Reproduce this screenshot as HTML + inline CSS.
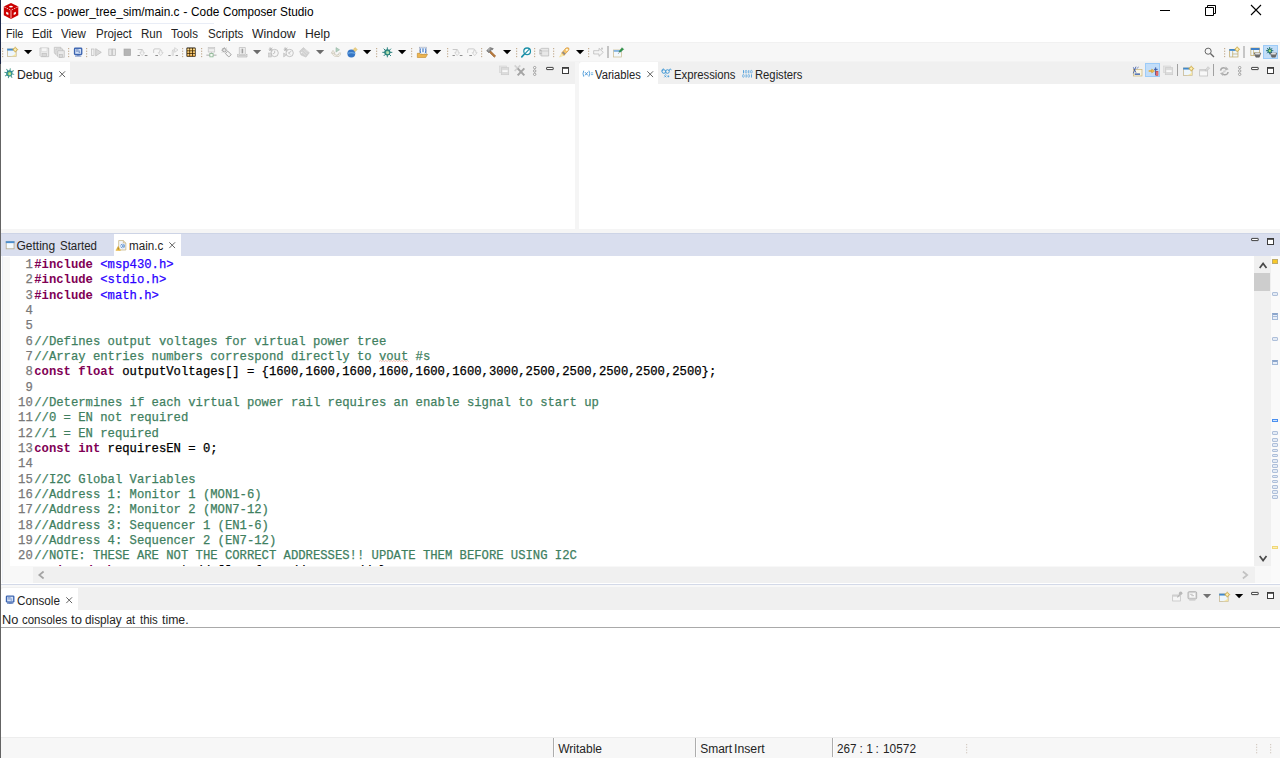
<!DOCTYPE html>
<html lang="en">
<head>
<meta charset="utf-8">
<title>CCS - power_tree_sim/main.c - Code Composer Studio</title>
<style>
*{box-sizing:border-box;margin:0;padding:0}
html,body{width:1280px;height:758px;overflow:hidden;background:#fff}
body{position:relative;font-family:"Liberation Sans",sans-serif;font-size:12px;color:#000}
.abs{position:absolute}
.t{position:absolute;white-space:nowrap;line-height:16px;height:16px;font-size:12px;color:#242424;transform-origin:0 0}
svg{position:absolute;overflow:visible}
#titlebar{left:0;top:0;width:1280px;height:23px;background:#fff}
#menubar{left:0;top:23px;width:1280px;height:19px;background:#fff}
#menuline{left:0;top:23px;width:214px;height:1px;background:#e9edf6}
#toolbar{left:0;top:42px;width:1280px;height:20px;background:#f7f7f7;border-top:1px solid #f1f1f1}
#leftedge{left:0;top:0;width:1.300px;height:758px;background:#646464}
#leftedge2{left:0;top:0;width:1.300px;height:64px;background:#1c2848}
#toparea{left:0;top:62px;width:1280px;height:171px;background:#f5f5f5}
#tbline{left:1.300px;top:61px;width:1279px;height:1px;background:#f3f3f3}
#dbgtabs{left:1px;top:62px;width:574px;height:22px;background:#f0f0f0}
#dbgbody{left:1px;top:84px;width:574px;height:145px;background:#fff}
#vartabs{left:579px;top:62px;width:701px;height:22px;background:#f0f0f0}
#varbody{left:579px;top:84px;width:701px;height:145px;background:#fff}
.seltab{position:absolute;background:#fff}
#edtabs{left:1px;top:233px;width:1279px;height:23px;background:#d9deee;border-top:1px solid #cdd4e6}
#edbody{left:1px;top:256px;width:1279px;height:310px;background:#fff;overflow:hidden}
#marker{left:2.500px;top:257px;width:7.500px;height:309px;background:#f8f8f8}
#code{position:absolute;left:0;top:0;width:1254px;height:310px;overflow:hidden;font-family:"Liberation Mono",monospace;font-size:12.22px;line-height:15.333px;color:#000}
.ln{position:absolute;left:17.100px;height:15.333px;white-space:pre;-webkit-text-stroke:0.250px}
.gap{display:inline-block;width:1.500px}
.num{color:#787878}
.kw{color:#7f0055;font-weight:bold;-webkit-text-stroke:0}
.inc{color:#2a00ff}
.cm{color:#3f7f5f}
.sq{text-decoration:underline wavy #e8a080 1px;text-underline-offset:1.500px}
#vscroll{left:1254px;top:256px;width:17px;height:310px;background:#f0f0f0}
#vthumb{left:1254.300px;top:273.400px;width:15.900px;height:17.500px;background:#cdcdcd}
#ruler{left:1271px;top:256px;width:9px;height:327px;background:#fafafa}
#hscroll{left:33px;top:567px;width:1221.500px;height:16px;background:#f0f0f0}
#hstrip{left:33px;top:566px;width:1238px;height:1px;background:#f8f8f8}
#edleft{left:1.500px;top:256px;width:1px;height:329px;background:#eef1f8}
#hleft{left:2.500px;top:566px;width:30.500px;height:17px;background:#f8f8f8}
#hcorner{left:1254.500px;top:566px;width:16.500px;height:17px;background:#f8f8f8}
#conarea{left:0;top:583px;width:1280px;height:155px;background:#fff}
#conline{left:1px;top:584px;width:1279px;height:1px;background:#d3d9e8}
#contabs{left:1px;top:587px;width:1279px;height:23px;background:#f0f0f0}
#congap{left:1px;top:585px;width:1279px;height:2px;background:#f8f8f8}
#conrule{left:1px;top:627px;width:1279px;height:1px;background:#a9a9a9}
#status{left:0;top:737px;width:1280px;height:21px;background:#f7f7f7;border-top:1px solid #ededed}
</style>
</head>
<body>
<div id="titlebar" class="abs"></div>
<svg style="left:3px;top:3px" width="16" height="16" viewBox="0 0 16 16"><path d="M8 0 L15.300 3.500 L15.300 12.200 L8 15.900 L0.800 12.200 L0.800 3.500 Z" fill="#cc0000"/><path d="M1.200 3.900 L8 7.300 L14.900 3.900" stroke="#fff" stroke-opacity="0.800" stroke-width="0.900" stroke-dasharray="1.700 1" fill="none"/><path d="M8 7.600 L8 15.600" stroke="#ee8c8c" stroke-width="1.300" fill="none"/><ellipse cx="8" cy="3.600" rx="1.900" ry="0.950" fill="#fff"/><path d="M3.200 8.700 L5.400 9.700 L5.400 12 L3.200 11 Z" fill="#fff"/><path d="M12.900 8.700 L10.700 9.700 L10.700 12 L12.900 11 Z" fill="#fff"/></svg>
<span class="t" style="left:24.2px;top:4px;transform:scaleX(0.854);font-size:12.6px;color:#000">CCS</span><span class="t" style="left:49.78px;top:4px;font-size:12.6px;color:#000">-</span><span class="t" style="left:56.95px;top:4px;transform:scaleX(0.941);font-size:12.6px;color:#000">power_tree_sim/main.c</span><span class="t" style="left:183.33px;top:4px;font-size:12.6px;color:#000">-</span><span class="t" style="left:191.12px;top:4px;transform:scaleX(0.94);font-size:12.6px;color:#000">Code</span><span class="t" style="left:222.71px;top:4px;transform:scaleX(0.923);font-size:12.6px;color:#000">Composer</span><span class="t" style="left:279.92px;top:4px;transform:scaleX(0.94);font-size:12.6px;color:#000">Studio</span>
<svg style="left:1155px;top:0" width="125" height="22" viewBox="0 0 125 22"><path d="M5 10.500 H15" stroke="#000" stroke-width="1"/><path d="M50.500 7.500 H58.500 V15.500 H50.500 Z M52.500 7.500 V5.500 H60.500 V13.500 H58.500" stroke="#000" stroke-width="1" fill="none"/><path d="M96 5 L106 15 M106 5 L96 15" stroke="#000" stroke-width="1.100"/></svg>
<div id="menubar" class="abs"></div><div id="menuline" class="abs"></div>
<span class="t" style="left:5.56px;top:26px;transform:scaleX(0.896)">File</span><span class="t" style="left:32.34px;top:26px;transform:scaleX(0.965)">Edit</span><span class="t" style="left:61.44px;top:26px;transform:scaleX(0.963)">View</span><span class="t" style="left:95.64px;top:26px;transform:scaleX(0.957)">Project</span><span class="t" style="left:140.54px;top:26px;transform:scaleX(0.966)">Run</span><span class="t" style="left:171.14px;top:26px;transform:scaleX(0.961)">Tools</span><span class="t" style="left:207.52px;top:26px;transform:scaleX(0.965)">Scripts</span><span class="t" style="left:252.15px;top:26px;transform:scaleX(1.02)">Window</span><span class="t" style="left:305.14px;top:26px;transform:scaleX(1.016)">Help</span>
<div id="toolbar" class="abs"></div>
<div class="abs" style="left:1263px;top:45px;width:15.300px;height:13.800px;background:#c2ddf8;border:1px solid #9ccbf8"></div>
<svg style="left:7.2px;top:47px" width="10.67" height="10.67" viewBox="0 0 16 16"><rect x="0.800" y="3" width="13" height="11.300" fill="#eef6fc" stroke="#c4b48c" stroke-width="1.100"/><rect x="0.300" y="2.500" width="9.500" height="2.800" fill="#3f88cc"/><path d="M5 14 Q12 13 13.500 7.500 L13.500 14 Z" fill="#f6e6a4"/><circle cx="12.400" cy="3.900" r="2.700" fill="#fbeeb8" stroke="#c8a030" stroke-width="1.100"/><path d="M12.400 -0.500 V1 M12.400 6.800 V8.300 M8 3.900 H9.500 M15.300 3.900 H16.800" stroke="#c8a030" stroke-width="1"/></svg>
<svg style="left:38.7px;top:47px" width="10.67" height="10.67" viewBox="0 0 16 16"><path d="M1.5 1.500 H14.500 V14.500 H3 L1.500 13 Z" fill="#e9e9e9" stroke="#b8b8b8"/><rect x="4" y="1.500" width="8" height="5" fill="#f6f6f6" stroke="#d8d8d8" stroke-width="0.8"/><rect x="4.500" y="9.500" width="7" height="5" fill="#d8d8d8" stroke="#b8b8b8" stroke-width="0.8"/></svg>
<svg style="left:54px;top:47px" width="10.67" height="10.67" viewBox="0 0 16 16"><path d="M0.5 0.500 H10.500 V10.500 H2 L0.500 9 Z" fill="#e9e9e9" stroke="#b8b8b8"/><path d="M3 3 H13 V13 H4.500 L3 11.500 Z" fill="#e9e9e9" stroke="#b8b8b8"/><path d="M5.500 5.500 H15.500 V15.500 H7 L5.500 14 Z" fill="#e9e9e9" stroke="#b8b8b8"/><rect x="8" y="11" width="5" height="4.500" fill="#d8d8d8" stroke="#b8b8b8" stroke-width="0.8"/></svg>
<svg style="left:72.7px;top:47px" width="10.67" height="10.67" viewBox="0 0 16 16"><rect x="1.300" y="0.900" width="12.800" height="11.300" rx="2.200" fill="#3c64b0"/><rect x="3.300" y="2.900" width="8.800" height="7.300" fill="#d4e2f8"/><path d="M4.300 4.300 H8.500 M4.300 6.200 H10.500 M8.500 8 H10.800" stroke="#5070b0" stroke-width="1.100"/><path d="M5.500 12.200 H10 V13 H12.500 V14.300 H3 V13 H5.500 Z" fill="#4468b0" opacity="0.850"/></svg>
<svg style="left:91px;top:47px" width="10.67" height="10.67" viewBox="0 0 16 16"><rect x="1" y="3" width="3.500" height="10" fill="#f2f2f2" stroke="#b8b8b8"/><path d="M7 2.500 L15.500 8 L7 13.500 Z" fill="#d8d8d8" stroke="#b8b8b8"/></svg>
<svg style="left:106.6px;top:47px" width="10.67" height="10.67" viewBox="0 0 16 16"><rect x="2.700" y="3" width="4.600" height="10" fill="#e9e9e9" stroke="#b8b8b8"/><rect x="8.300" y="3" width="4.600" height="10" fill="#e9e9e9" stroke="#b8b8b8"/></svg>
<svg style="left:122px;top:47px" width="10.67" height="10.67" viewBox="0 0 16 16"><rect x="3" y="3" width="10" height="10" fill="#b4b4b4" stroke="#a8a8a8"/></svg>
<svg style="left:137px;top:47px" width="10.67" height="10.67" viewBox="0 0 16 16"><path d="M1 3.800 H8.500" stroke="#c8c8c8" stroke-width="1.500" fill="none"/><path d="M6 5.500 H9.500 V8.500 H11.500 L7.750 13 L4 8.500 H6 Z" fill="#f4f4f4" stroke="#c4c4c4" stroke-width="0.900"/><path d="M0.800 12.800 H4.300 M11.700 12.800 H15.700" stroke="#909090" stroke-width="1.500"/></svg>
<svg style="left:153px;top:47px" width="10.67" height="10.67" viewBox="0 0 16 16"><path d="M1 9 V4.500 Q1 2.800 3 2.800 H9 Q12 2.800 12 5" stroke="#c8c8c8" stroke-width="1.400" fill="none"/><path d="M9.800 5.500 H13.300 V8.500 H15.300 L11.550 13 L7.800 8.500 H9.800 Z" fill="#f4f4f4" stroke="#c4c4c4" stroke-width="0.900"/><path d="M3.500 12.800 H7.500" stroke="#909090" stroke-width="1.500"/></svg>
<svg style="left:168px;top:47px" width="10.67" height="10.67" viewBox="0 0 16 16"><path d="M7 13 V7 Q7 4.500 10 4.500" stroke="#c8c8c8" stroke-width="2.600" fill="none"/><path d="M7 13 V7 Q7 4.500 10 4.500" stroke="#f4f4f4" stroke-width="1" fill="none"/><path d="M10 1 L15 4.500 L10 8 Z" fill="#f4f4f4" stroke="#c4c4c4" stroke-width="0.900"/><path d="M0.500 12.800 H4 M11.500 12.800 H15" stroke="#909090" stroke-width="1.500"/></svg>
<svg style="left:186.4px;top:47px" width="10.67" height="10.67" viewBox="0 0 16 16"><rect x="0.700" y="0.900" width="13.800" height="13.800" rx="1.200" fill="#1c1408"/><rect x="1.9" y="2.3" width="3.300" height="3.100" fill="#f4b840"/><rect x="2.3" y="2.6" width="2.500" height="1.300" fill="#fff4d0"/><rect x="6.1" y="2.3" width="3.300" height="3.100" fill="#f4b840"/><rect x="6.5" y="2.6" width="2.500" height="1.300" fill="#fff4d0"/><rect x="10.3" y="2.3" width="3.300" height="3.100" fill="#f4b840"/><rect x="10.7" y="2.6" width="2.500" height="1.300" fill="#fff4d0"/><rect x="1.9" y="6.5" width="3.300" height="3.100" fill="#eca830"/><rect x="2.3" y="6.8" width="2.500" height="1.300" fill="#fff4d0"/><rect x="6.1" y="6.5" width="3.300" height="3.100" fill="#eca830"/><rect x="6.5" y="6.8" width="2.500" height="1.300" fill="#fff4d0"/><rect x="10.3" y="6.5" width="3.300" height="3.100" fill="#eca830"/><rect x="10.7" y="6.8" width="2.500" height="1.300" fill="#fff4d0"/><rect x="1.9" y="10.7" width="3.300" height="3.100" fill="#e09828"/><rect x="2.3" y="11.0" width="2.500" height="1.300" fill="#fff4d0"/><rect x="6.1" y="10.7" width="3.300" height="3.100" fill="#e09828"/><rect x="6.5" y="11.0" width="2.500" height="1.300" fill="#fff4d0"/><rect x="10.3" y="10.7" width="3.300" height="3.100" fill="#e09828"/><rect x="10.7" y="11.0" width="2.500" height="1.300" fill="#fff4d0"/></svg>
<svg style="left:205.5px;top:47px" width="10.67" height="10.67" viewBox="0 0 16 16"><rect x="3.300" y="1" width="9.800" height="6.500" fill="#f0f0f0" stroke="#c0c0c0"/><rect x="3.300" y="1" width="9.800" height="2.300" fill="#d4d4d4"/><path d="M8.200 7.500 V10" stroke="#c0c0c0" stroke-width="1.300"/><path d="M0.500 12.300 H15.800" stroke="#c4c4c4" stroke-width="2.200"/><rect x="5.800" y="9.800" width="4.800" height="5" fill="#f4faf4" stroke="#7fae88" stroke-width="1.100"/></svg>
<svg style="left:221px;top:47px" width="10.67" height="10.67" viewBox="0 0 16 16"><circle cx="5" cy="4.800" r="2.700" fill="#e4e4e4" stroke="#949494" stroke-width="1.200"/><path d="M5 0.300 V1.800 M0.500 4.800 H2 M1.600 1.400 L2.800 2.600 M8.400 1.400 L7.200 2.600 M1.600 8.200 L2.800 7 M8 4.800 H9.500" stroke="#949494" stroke-width="1"/><rect x="7.300" y="8" width="7.500" height="5.200" rx="1" fill="#f4f4f4" stroke="#9c9c9c" stroke-width="1.300" transform="rotate(42 11 10.500)"/></svg>
<svg style="left:236.5px;top:47px" width="10.67" height="10.67" viewBox="0 0 16 16"><path d="M3.500 0.800 H12.500 V11 H3.500 Z" fill="#f6f6f6" stroke="#b4b4b4"/><path d="M8 2.500 V9.500" stroke="#a0a0a0" stroke-width="2.400"/><path d="M5.800 2.500 V9 M10.200 2.500 V9" stroke="#d0d0d0" stroke-width="0.900"/><path d="M1 10.500 L3 12.500 H13 L15 10.500 V15 H1 Z" fill="#e4e4e4" stroke="#b4b4b4"/></svg>
<svg style="left:267.5px;top:47px" width="10.67" height="10.67" viewBox="0 0 16 16"><circle cx="10" cy="9" r="5.500" fill="#f6f6f6" stroke="#b8b8b8" stroke-width="1.200"/><path d="M10 5.500 V9 L7 10.500" stroke="#b8b8b8" stroke-width="1.200" fill="none"/><path d="M1.500 1 L6.500 6 M6.500 1 L1.500 6 M4 0.500 V6.500 M1 3.500 H7" stroke="#b0b0b0" stroke-width="1"/><rect x="1" y="9" width="4" height="6" fill="#d8d8d8" stroke="#b8b8b8" stroke-width="0.8"/></svg>
<svg style="left:283px;top:47px" width="10.67" height="10.67" viewBox="0 0 16 16"><circle cx="10" cy="9" r="5.500" fill="#f6f6f6" stroke="#b8b8b8" stroke-width="1.200"/><path d="M12.500 6.500 L8 9 L11 11" stroke="#b8b8b8" stroke-width="1.200" fill="none"/><path d="M1.500 1 L6.500 6 M6.500 1 L1.500 6 M4 0.500 V6.500 M1 3.500 H7" stroke="#b0b0b0" stroke-width="1"/><path d="M1 9 L5 12 L1 15 Z" fill="#d8d8d8" stroke="#b8b8b8" stroke-width="0.8"/></svg>
<svg style="left:299.3px;top:47px" width="10.67" height="10.67" viewBox="0 0 16 16"><path d="M0.800 6.500 L6.500 0.800 L15.500 8.500 L10.500 15.200 L3 12 Z" fill="#d0d0d0" stroke="#c0c0c0" stroke-width="0.800"/><path d="M4 6.500 L10 12.500 M6.500 4.500 L12.500 10.500 M9 3.500 L13.500 8" stroke="#e8e8e8" stroke-width="1"/><circle cx="3.800" cy="8.500" r="1" fill="#f4f4f4"/></svg>
<svg style="left:331px;top:47px" width="10.67" height="10.67" viewBox="0 0 16 16"><path d="M3.200 8 A5.200 5.200 0 0 0 13.600 8.500" fill="none" stroke="#c4c0b4" stroke-width="3.400"/><path d="M3.200 8 A5.200 5.200 0 0 0 13.600 8.500" fill="none" stroke="#f2eee4" stroke-width="1.700"/><path d="M0.200 9.300 L3 5 L6.200 9.300 Z" fill="#f2eee4" stroke="#c4c0b4" stroke-width="0.900"/><path d="M7.500 0.800 L12.800 4.200 L7.500 7.600 Z" fill="#b4d0c0" stroke="#90b4a0" stroke-width="0.800"/></svg>
<svg style="left:347.2px;top:47px" width="10.67" height="10.67" viewBox="0 0 16 16"><circle cx="6.500" cy="9.800" r="5.900" fill="#3676c4"/><path d="M0.800 8.800 Q6.500 6.200 12.200 8.800 L12.200 10.600 Q6.500 8.400 0.800 10.600 Z" fill="#6ca8e4"/><path d="M12.300 0.800 L15.400 3.900 L12.300 7 L9.200 3.900 Z" fill="#ecd084" stroke="#d0ac50" stroke-width="0.600"/></svg>
<svg style="left:382.2px;top:47px" width="10.67" height="10.67" viewBox="0 0 16 16"><path d="M8 0.500 V15.500 M0.500 8 H15.500 M2.500 2.500 L13.500 13.500 M13.500 2.500 L2.500 13.500" stroke="#2c8480" stroke-width="1.500"/><circle cx="8" cy="8" r="4.700" fill="#2c8480"/><circle cx="8.300" cy="8.300" r="2.500" fill="#9cd4a8"/><circle cx="9" cy="9" r="1.200" fill="#e4f4c8"/></svg>
<svg style="left:417px;top:47px" width="10.67" height="10.67" viewBox="0 0 16 16"><rect x="3.500" y="0.300" width="11" height="11" fill="#fafcff" stroke="#98a4bc" stroke-width="0.900"/><path d="M6.300 2 Q5 2 5.300 4 Q5.500 5.500 4.300 5.700 Q5.500 5.900 5.300 7.500 Q5 9.300 6.300 9.300 M11.700 2 Q13 2 12.700 4 Q12.500 5.500 13.700 5.700 Q12.500 5.900 12.700 7.500 Q13 9.300 11.700 9.300" stroke="#2868c0" stroke-width="1.300" fill="none"/><path d="M9 2 V8" stroke="#2868c0" stroke-width="1.600"/><path d="M0.500 9.500 H4 L5.500 11 H15.800 L13 15.800 H0.500 Z" fill="#ecb450" stroke="#c08828" stroke-width="0.900"/></svg>
<svg style="left:452px;top:47px" width="10.67" height="10.67" viewBox="0 0 16 16"><path d="M1 3.800 H8.500" stroke="#c8c8c8" stroke-width="1.500" fill="none"/><path d="M6 5.500 H9.500 V8.500 H11.500 L7.750 13 L4 8.500 H6 Z" fill="#f4f4f4" stroke="#c4c4c4" stroke-width="0.900"/><path d="M0.800 12.800 H4.300 M11.700 12.800 H15.700" stroke="#909090" stroke-width="1.500"/></svg>
<svg style="left:467.3px;top:47px" width="10.67" height="10.67" viewBox="0 0 16 16"><path d="M1 9 V4.500 Q1 2.800 3 2.800 H9 Q12 2.800 12 5" stroke="#c8c8c8" stroke-width="1.400" fill="none"/><path d="M9.800 5.500 H13.300 V8.500 H15.300 L11.550 13 L7.800 8.500 H9.800 Z" fill="#f4f4f4" stroke="#c4c4c4" stroke-width="0.900"/><path d="M3.500 12.800 H7.500" stroke="#909090" stroke-width="1.500"/></svg>
<svg style="left:486px;top:47px" width="10.67" height="10.67" viewBox="0 0 16 16"><path d="M7 6 L14.500 13.500 L12.500 15.500 L5 8 Z" fill="#b87838" stroke="#8a5420" stroke-width="0.8"/><path d="M1 5.500 L6 0.800 L11 2.500 L9.500 4 L8.500 3.800 L4.500 8.500 Z" fill="#8c8c8c" stroke="#585858" stroke-width="0.9"/><path d="M3 5 L6.500 1.800" stroke="#d8d8d8" stroke-width="1"/></svg>
<svg style="left:520.5px;top:47px" width="10.67" height="10.67" viewBox="0 0 16 16"><circle cx="9.200" cy="6.500" r="5" fill="#fff" stroke="#1c90a8" stroke-width="1.900"/><path d="M5.500 10.200 L1.200 14.800" stroke="#1c90a8" stroke-width="2.500" stroke-linecap="round"/><path d="M6 9.800 L12.500 3.200" stroke="#1c90a8" stroke-width="1.600"/></svg>
<svg style="left:539px;top:47px" width="10.67" height="10.67" viewBox="0 0 16 16"><path d="M1 4 L4 2 H14.500 V13.500 H4 L1 11 Z" fill="#e8e8e8" stroke="#b4b4b4"/><path d="M1 4 L4 6 V13.500 M4 6 H14.500" stroke="#c0c0c0" stroke-width="0.900" fill="none"/><circle cx="2.800" cy="5.500" r="1.200" fill="#b0b0b0"/><circle cx="2.800" cy="9.500" r="1.200" fill="#b0b0b0"/></svg>
<svg style="left:558.7px;top:47px" width="10.67" height="10.67" viewBox="0 0 16 16"><path d="M0.800 15.200 L4.500 8.500 L8.500 12 Z" fill="#fbeeb4" stroke="#ecd070" stroke-width="0.600"/><path d="M4 9 L10.500 1.500 Q14 0.500 15 2 Q15.500 4 13.500 6 L7.500 12.500 Z" fill="#f6c468" stroke="#d08828" stroke-width="0.900"/><path d="M5.500 7.500 L9 11" stroke="#8c8c8c" stroke-width="2.600"/><circle cx="11.800" cy="4.300" r="1.700" fill="#fff8e0"/></svg>
<svg style="left:593px;top:47px" width="10.67" height="10.67" viewBox="0 0 16 16"><path d="M1 5.500 H9 V2 L15.500 8 L9 14 V10.500 H1 Z" fill="#f4f4f4" stroke="#b8b8b8" stroke-width="1.100"/><circle cx="13.500" cy="2.500" r="1.600" fill="#c8c8c8"/></svg>
<svg style="left:613px;top:47px" width="10.67" height="10.67" viewBox="0 0 16 16"><rect x="1" y="4.500" width="12" height="10.500" fill="#f4f9fd" stroke="#c8b888" stroke-width="1"/><rect x="1" y="4.500" width="12" height="2.800" fill="#86b4e0"/><path d="M9 7 L13.500 1 L16 3.500 L11 7.500 Z" fill="#2c9848" stroke="#1c7030" stroke-width="0.700"/><path d="M9.500 8 L8 10" stroke="#606060" stroke-width="1"/></svg>
<svg style="left:1203.5px;top:47px" width="10.67" height="10.67" viewBox="0 0 16 16"><circle cx="6.200" cy="6.300" r="4.600" fill="none" stroke="#646464" stroke-width="1.500"/><path d="M9.700 9.800 L15 15" stroke="#646464" stroke-width="2"/></svg>
<svg style="left:1229px;top:47px" width="10.67" height="10.67" viewBox="0 0 16 16"><rect x="1" y="3.500" width="12.500" height="11.500" fill="#eef6fc" stroke="#c0a868" stroke-width="1.100"/><rect x="0.500" y="3" width="9.500" height="2.800" fill="#3f88cc"/><path d="M5.500 6 V15 M5.500 10.500 H13.500" stroke="#c0a868" stroke-width="1.100"/><circle cx="12.300" cy="3.500" r="2.700" fill="#fbeeb8" stroke="#c8a030" stroke-width="1.100"/><path d="M12.300 -0.800 V0.600 M12.300 6.400 V7.800 M8 3.500 H9.400 M15.200 3.500 H16.600" stroke="#c8a030" stroke-width="1"/></svg>
<svg style="left:1250px;top:47px" width="10.67" height="10.67" viewBox="0 0 16 16"><rect x="1.300" y="1.500" width="13" height="11.500" fill="#eef6fc" stroke="#c0a868" stroke-width="1.100"/><rect x="1.300" y="1.500" width="13" height="3" fill="#3f80c8"/><path d="M5.300 4.500 V13 M5.300 8.500 H14.300" stroke="#c8b070" stroke-width="1"/><path d="M6.300 9 H16.300 L14 15.300 H8.800 Z" fill="#6c6c6c" stroke="#505050" stroke-width="0.700"/><ellipse cx="11.300" cy="10" rx="4" ry="1.400" fill="#e0e0e0"/></svg>
<svg style="left:1266.3px;top:47px" width="10.67" height="10.67" viewBox="0 0 16 16"><path d="M5.500 0 V11 M0 5.500 H11 M1.700 1.700 L9.300 9.300 M9.300 1.700 L1.700 9.300" stroke="#1c6c6c" stroke-width="1.400"/><circle cx="5.500" cy="5.500" r="3.400" fill="#1c6c6c"/><circle cx="5.700" cy="5.700" r="1.900" fill="#a8e070"/><path d="M6.300 9 H16.300 L14 15.300 H8.800 Z" fill="#6c6c6c" stroke="#505050" stroke-width="0.700"/><ellipse cx="11.300" cy="10" rx="4" ry="1.400" fill="#e0e0e0"/></svg>
<svg style="left:23.9px;top:49.9px" width="8.2" height="4.3" viewBox="0 0 8.2 4.3"><path d="M0 0 H8.2 L4.1 4.3 Z" fill="#000"/></svg>
<svg style="left:363.2px;top:49.9px" width="8.2" height="4.3" viewBox="0 0 8.2 4.3"><path d="M0 0 H8.2 L4.1 4.3 Z" fill="#000"/></svg>
<svg style="left:398.2px;top:49.9px" width="8.2" height="4.3" viewBox="0 0 8.2 4.3"><path d="M0 0 H8.2 L4.1 4.3 Z" fill="#000"/></svg>
<svg style="left:433.2px;top:49.9px" width="8.2" height="4.3" viewBox="0 0 8.2 4.3"><path d="M0 0 H8.2 L4.1 4.3 Z" fill="#000"/></svg>
<svg style="left:503px;top:49.9px" width="8.2" height="4.3" viewBox="0 0 8.2 4.3"><path d="M0 0 H8.2 L4.1 4.3 Z" fill="#000"/></svg>
<svg style="left:576px;top:49.9px" width="8.2" height="4.3" viewBox="0 0 8.2 4.3"><path d="M0 0 H8.2 L4.1 4.3 Z" fill="#000"/></svg>
<svg style="left:253px;top:49.9px" width="8.2" height="4.3" viewBox="0 0 8.2 4.3"><path d="M0 0 H8.2 L4.1 4.3 Z" fill="#6c6c6c"/></svg>
<svg style="left:316px;top:49.9px" width="8.2" height="4.3" viewBox="0 0 8.2 4.3"><path d="M0 0 H8.2 L4.1 4.3 Z" fill="#6c6c6c"/></svg>
<svg style="left:1.95px;top:47.9px" width="2" height="10.6" viewBox="0 0 2 10.6"><rect x="0" y="0.00" width="1.200" height="1.200" fill="#c4ae94"/><rect x="0" y="2.65" width="1.200" height="1.200" fill="#c4ae94"/><rect x="0" y="5.30" width="1.200" height="1.200" fill="#c4ae94"/><rect x="0" y="7.95" width="1.200" height="1.200" fill="#c4ae94"/></svg>
<svg style="left:67.75px;top:47.9px" width="2" height="10.6" viewBox="0 0 2 10.6"><rect x="0" y="0.00" width="1.200" height="1.200" fill="#c4ae94"/><rect x="0" y="2.65" width="1.200" height="1.200" fill="#c4ae94"/><rect x="0" y="5.30" width="1.200" height="1.200" fill="#c4ae94"/><rect x="0" y="7.95" width="1.200" height="1.200" fill="#c4ae94"/></svg>
<svg style="left:86.45px;top:47.9px" width="2" height="10.6" viewBox="0 0 2 10.6"><rect x="0" y="0.00" width="1.200" height="1.200" fill="#c4ae94"/><rect x="0" y="2.65" width="1.200" height="1.200" fill="#c4ae94"/><rect x="0" y="5.30" width="1.200" height="1.200" fill="#c4ae94"/><rect x="0" y="7.95" width="1.200" height="1.200" fill="#c4ae94"/></svg>
<svg style="left:181.95px;top:47.9px" width="2" height="10.6" viewBox="0 0 2 10.6"><rect x="0" y="0.00" width="1.200" height="1.200" fill="#c4ae94"/><rect x="0" y="2.65" width="1.200" height="1.200" fill="#c4ae94"/><rect x="0" y="5.30" width="1.200" height="1.200" fill="#c4ae94"/><rect x="0" y="7.95" width="1.200" height="1.200" fill="#c4ae94"/></svg>
<svg style="left:200.65px;top:47.9px" width="2" height="10.6" viewBox="0 0 2 10.6"><rect x="0" y="0.00" width="1.200" height="1.200" fill="#c4ae94"/><rect x="0" y="2.65" width="1.200" height="1.200" fill="#c4ae94"/><rect x="0" y="5.30" width="1.200" height="1.200" fill="#c4ae94"/><rect x="0" y="7.95" width="1.200" height="1.200" fill="#c4ae94"/></svg>
<svg style="left:376.35px;top:47.9px" width="2" height="10.6" viewBox="0 0 2 10.6"><rect x="0" y="0.00" width="1.200" height="1.200" fill="#c4ae94"/><rect x="0" y="2.65" width="1.200" height="1.200" fill="#c4ae94"/><rect x="0" y="5.30" width="1.200" height="1.200" fill="#c4ae94"/><rect x="0" y="7.95" width="1.200" height="1.200" fill="#c4ae94"/></svg>
<svg style="left:411.35px;top:47.9px" width="2" height="10.6" viewBox="0 0 2 10.6"><rect x="0" y="0.00" width="1.200" height="1.200" fill="#c4ae94"/><rect x="0" y="2.65" width="1.200" height="1.200" fill="#c4ae94"/><rect x="0" y="5.30" width="1.200" height="1.200" fill="#c4ae94"/><rect x="0" y="7.95" width="1.200" height="1.200" fill="#c4ae94"/></svg>
<svg style="left:446.75px;top:47.9px" width="2" height="10.6" viewBox="0 0 2 10.6"><rect x="0" y="0.00" width="1.200" height="1.200" fill="#c4ae94"/><rect x="0" y="2.65" width="1.200" height="1.200" fill="#c4ae94"/><rect x="0" y="5.30" width="1.200" height="1.200" fill="#c4ae94"/><rect x="0" y="7.95" width="1.200" height="1.200" fill="#c4ae94"/></svg>
<svg style="left:481.05px;top:47.9px" width="2" height="10.6" viewBox="0 0 2 10.6"><rect x="0" y="0.00" width="1.200" height="1.200" fill="#c4ae94"/><rect x="0" y="2.65" width="1.200" height="1.200" fill="#c4ae94"/><rect x="0" y="5.30" width="1.200" height="1.200" fill="#c4ae94"/><rect x="0" y="7.95" width="1.200" height="1.200" fill="#c4ae94"/></svg>
<svg style="left:515.55px;top:47.9px" width="2" height="10.6" viewBox="0 0 2 10.6"><rect x="0" y="0.00" width="1.200" height="1.200" fill="#c4ae94"/><rect x="0" y="2.65" width="1.200" height="1.200" fill="#c4ae94"/><rect x="0" y="5.30" width="1.200" height="1.200" fill="#c4ae94"/><rect x="0" y="7.95" width="1.200" height="1.200" fill="#c4ae94"/></svg>
<svg style="left:534.35px;top:47.9px" width="2" height="10.6" viewBox="0 0 2 10.6"><rect x="0" y="0.00" width="1.200" height="1.200" fill="#c4ae94"/><rect x="0" y="2.65" width="1.200" height="1.200" fill="#c4ae94"/><rect x="0" y="5.30" width="1.200" height="1.200" fill="#c4ae94"/><rect x="0" y="7.95" width="1.200" height="1.200" fill="#c4ae94"/></svg>
<svg style="left:552.95px;top:47.9px" width="2" height="10.6" viewBox="0 0 2 10.6"><rect x="0" y="0.00" width="1.200" height="1.200" fill="#c4ae94"/><rect x="0" y="2.65" width="1.200" height="1.200" fill="#c4ae94"/><rect x="0" y="5.30" width="1.200" height="1.200" fill="#c4ae94"/><rect x="0" y="7.95" width="1.200" height="1.200" fill="#c4ae94"/></svg>
<svg style="left:588.35px;top:47.9px" width="2" height="10.6" viewBox="0 0 2 10.6"><rect x="0" y="0.00" width="1.200" height="1.200" fill="#c4ae94"/><rect x="0" y="2.65" width="1.200" height="1.200" fill="#c4ae94"/><rect x="0" y="5.30" width="1.200" height="1.200" fill="#c4ae94"/><rect x="0" y="7.95" width="1.200" height="1.200" fill="#c4ae94"/></svg>
<svg style="left:1224.25px;top:47.9px" width="2" height="10.6" viewBox="0 0 2 10.6"><rect x="0" y="0.00" width="1.200" height="1.200" fill="#c4ae94"/><rect x="0" y="2.65" width="1.200" height="1.200" fill="#c4ae94"/><rect x="0" y="5.30" width="1.200" height="1.200" fill="#c4ae94"/><rect x="0" y="7.95" width="1.200" height="1.200" fill="#c4ae94"/></svg>
<div class="abs" style="left:607.1px;top:46.4px;width:1.6px;height:11.3px;background:#c4c4c4"></div>
<div class="abs" style="left:1243.1px;top:46.3px;width:1.6px;height:11.7px;background:#c6c6c6"></div>
<div id="toparea" class="abs"></div><div id="tbline" class="abs"></div>
<div id="dbgtabs" class="abs"></div><div id="dbgbody" class="abs"></div>
<div class="seltab" style="left:1px;top:62.200px;width:68.800px;height:21.800px;border-radius:3px 0 0 0"></div>
<svg style="left:4.3px;top:68.4px" width="10.67" height="10.67" viewBox="0 0 16 16"><g transform="rotate(12 8 8)"><path d="M8 0.500 V15.500 M0.500 8 H15.500 M2.500 2.500 L13.500 13.500 M13.500 2.500 L2.500 13.500" stroke="#4a9a88" stroke-width="1.500"/><circle cx="8" cy="8" r="4.700" fill="#2c8898"/><circle cx="8.300" cy="8.300" r="2.800" fill="#8ccc70"/><circle cx="8.800" cy="8.800" r="1.400" fill="#d8f0b0"/></g></svg>
<span class="t" style="left:16.94px;top:67px;transform:scaleX(1.015)">Debug</span>
<svg style="left:58.7px;top:70.8px" width="6.4" height="6.4" viewBox="0 0 6.4 6.4"><path d="M0.300 0.300 L6.1000000000000005 6.1000000000000005 M6.1000000000000005 0.300 L0.300 6.1000000000000005" stroke="#5a5a5a" stroke-width="0.950"/></svg>
<svg style="left:499.3px;top:65px" width="10.67" height="10.67" viewBox="0 0 16 16"><rect x="1" y="1.500" width="10" height="10" fill="#e4e4e4" stroke="#d4d4d4" stroke-width="1"/><rect x="3.500" y="4" width="11" height="10.500" fill="#dcdcdc" stroke="#cccccc" stroke-width="1.100"/><rect x="5" y="7.800" width="8" height="2.600" fill="#fbfbfb"/></svg>
<svg style="left:514px;top:64.8px" width="10.67" height="10.67" viewBox="0 0 16 16"><path d="M1 0.500 L9.500 9 M9.500 0.500 L1 9" stroke="#d2d2d2" stroke-width="2.600"/><path d="M5.500 5 L15.500 15.500 M15.500 5 L5.500 15.500" stroke="#a4a4a4" stroke-width="3"/></svg>
<svg style="left:532.8px;top:65.5px" width="3.400" height="10" viewBox="0 0 3.400 10"><circle cx="1.700" cy="1.600" r="1.200" fill="#fdfdfd" stroke="#868686" stroke-width="0.750"/><circle cx="1.700" cy="4.950" r="1.200" fill="#fdfdfd" stroke="#868686" stroke-width="0.750"/><circle cx="1.700" cy="8.300" r="1.200" fill="#fdfdfd" stroke="#868686" stroke-width="0.750"/></svg>
<svg style="left:545.8px;top:66.8px" width="8" height="3" viewBox="0 0 8 3"><rect x="0.600" y="0.400" width="6.600" height="2.200" rx="0.300" fill="#fff" stroke="#404040" stroke-width="1"/></svg><svg style="left:561.8px;top:66.8px" width="7" height="7" viewBox="0 0 7 7"><rect x="0.500" y="0.500" width="6" height="6" fill="#fff" stroke="#3c3c3c" stroke-width="1"/><rect x="0" y="0" width="7" height="1.800" fill="#3c3c3c"/></svg>
<div id="vartabs" class="abs"></div><div id="varbody" class="abs"></div>
<div class="seltab" style="left:579px;top:62.200px;width:79px;height:21.800px;border-radius:3px 0 0 0"></div>
<svg style="left:581.5px;top:67.5px" width="10.67" height="10.67" viewBox="0 0 16 16"><path d="M2.600 4 Q0.400 8.500 2.600 13 M10.400 4 Q12.600 8.500 10.400 13" stroke="#5aa4dc" stroke-width="1.500" fill="none"/><path d="M4.600 6.300 L8.600 11 M8.600 6.300 L4.600 11" stroke="#4a98d8" stroke-width="1.500"/><path d="M13.300 7.300 H16.800 M13.300 9.900 H16.800" stroke="#6aaee0" stroke-width="1.300"/></svg>
<span class="t" style="left:594.54px;top:67px;transform:scaleX(0.934)">Variables</span>
<svg style="left:647.2px;top:70.8px" width="6.4" height="6.4" viewBox="0 0 6.4 6.4"><path d="M0.300 0.300 L6.1000000000000005 6.1000000000000005 M6.1000000000000005 0.300 L0.300 6.1000000000000005" stroke="#5a5a5a" stroke-width="0.950"/></svg>
<svg style="left:661px;top:67.5px" width="10.67" height="10.67" viewBox="0 0 16 16"><circle cx="4.300" cy="5.300" r="2.700" fill="none" stroke="#3a94d4" stroke-width="1.400"/><circle cx="9.700" cy="5.300" r="2.700" fill="none" stroke="#3a94d4" stroke-width="1.400"/><path d="M1 5 Q1.500 1 4.500 1.200 M12 4.500 L13.500 1.300 L15.800 2.800 M7 8.500 V10" stroke="#3a94d4" stroke-width="1.200" fill="none"/><path d="M5 11 L8 14 M8 11 L5 14 M9.500 12.500 H12.500 M11 11 V14" stroke="#3a94d4" stroke-width="1.100" fill="none"/></svg>
<span class="t" style="left:674.25px;top:67px;transform:scaleX(0.941)">Expressions</span>
<svg style="left:742px;top:67.5px" width="10.67" height="10.67" viewBox="0 0 16 16"><rect x="1.50" y="3.20" width="1.400" height="4.800" fill="#4f9fdc"/><rect x="4.90" y="3.60" width="2.400" height="4" rx="1.100" fill="none" stroke="#4f9fdc" stroke-width="1"/><rect x="9.50" y="3.20" width="1.400" height="4.800" fill="#4f9fdc"/><rect x="12.90" y="3.60" width="2.400" height="4" rx="1.100" fill="none" stroke="#4f9fdc" stroke-width="1"/><rect x="0.90" y="9.90" width="2.400" height="4" rx="1.100" fill="none" stroke="#4f9fdc" stroke-width="1"/><rect x="5.50" y="9.50" width="1.400" height="4.800" fill="#4f9fdc"/><rect x="8.90" y="9.90" width="2.400" height="4" rx="1.100" fill="none" stroke="#4f9fdc" stroke-width="1"/><rect x="13.50" y="9.50" width="1.400" height="4.800" fill="#4f9fdc"/></svg>
<span class="t" style="left:755.25px;top:67px;transform:scaleX(0.937)">Registers</span>
<div class="abs" style="left:1145px;top:63px;width:15.300px;height:13.800px;background:#c2ddf8;border:1px solid #9ccbf8"></div>
<svg style="left:1132px;top:65.5px" width="10.67" height="10.67" viewBox="0 0 16 16"><rect x="2" y="5" width="13" height="10" fill="#fbf6e4" stroke="#c8b070" stroke-width="1"/><rect x="4" y="11" width="8" height="2.500" fill="#5a7ab8"/><path d="M2 2 L6 10 M6 1 L2 11" stroke="#3858a8" stroke-width="1.300"/><path d="M7 4 L10 1.500" stroke="#3858a8" stroke-width="1"/></svg>
<svg style="left:1147.5px;top:65.5px" width="10.67" height="10.67" viewBox="0 0 16 16"><path d="M1 7.500 H6" stroke="#e8b038" stroke-width="2.400"/><path d="M5.500 4.500 L10 7.500 L5.500 10.500 Z" fill="#f0c050" stroke="#c89020" stroke-width="0.600"/><path d="M11.500 2 V14 M9 5 H14.500" stroke="#3858a8" stroke-width="1.500"/><rect x="12" y="8" width="3" height="6" fill="#f08080" stroke="#c03030" stroke-width="0.800"/></svg>
<svg style="left:1163px;top:65px" width="10.67" height="10.67" viewBox="0 0 16 16"><rect x="1" y="1.500" width="10" height="10" fill="#e4e4e4" stroke="#d4d4d4" stroke-width="1"/><rect x="3.500" y="4" width="11" height="10.500" fill="#dcdcdc" stroke="#cccccc" stroke-width="1.100"/><rect x="5" y="7.800" width="8" height="2.600" fill="#fbfbfb"/></svg>
<div class="abs" style="left:1177px;top:64.4px;width:1.2px;height:11.5px;background:#a0a0a0"></div>
<svg style="left:1183px;top:65.5px" width="10.67" height="10.67" viewBox="0 0 16 16"><rect x="0.800" y="3" width="13" height="11.300" fill="#eef6fc" stroke="#c4b48c" stroke-width="1.100"/><rect x="0.300" y="2.500" width="9.500" height="2.800" fill="#3f88cc"/><path d="M5 14 Q12 13 13.500 7.500 L13.500 14 Z" fill="#f6e6a4"/><circle cx="12.400" cy="3.900" r="2.700" fill="#fbeeb8" stroke="#c8a030" stroke-width="1.100"/><path d="M12.400 -0.500 V1 M12.400 6.800 V8.300 M8 3.900 H9.500 M15.300 3.900 H16.800" stroke="#c8a030" stroke-width="1"/></svg>
<svg style="left:1199px;top:65.5px" width="10.67" height="10.67" viewBox="0 0 16 16"><rect x="1" y="5.500" width="12" height="9.500" fill="#f8f8f8" stroke="#bcbcbc" stroke-width="1.100"/><rect x="1" y="5.500" width="12" height="2.500" fill="#d4d4d4"/><path d="M9 7 L13.500 1 L16 3.500 L11 7.500 Z" fill="#dcdcdc" stroke="#b4b4b4" stroke-width="0.700"/></svg>
<div class="abs" style="left:1213px;top:64.4px;width:1.2px;height:11.5px;background:#a0a0a0"></div>
<svg style="left:1218.5px;top:65.5px" width="10.67" height="10.67" viewBox="0 0 16 16"><path d="M2.300 7 Q3 2.500 8 2.800 L11 4.300 M13.700 9 Q13 13.500 8 13.200 L5 11.700" stroke="#a8a8a8" stroke-width="2.200" fill="none"/><path d="M10 0.800 L14.500 5 L9.300 7 Z M6 15.200 L1.500 11 L6.700 9 Z" fill="#b4b4b4"/><circle cx="8" cy="8" r="1.800" fill="#d0d0d0"/></svg>
<svg style="left:1238.4px;top:65.5px" width="3.400" height="10" viewBox="0 0 3.400 10"><circle cx="1.700" cy="1.600" r="1.200" fill="#fdfdfd" stroke="#868686" stroke-width="0.750"/><circle cx="1.700" cy="4.950" r="1.200" fill="#fdfdfd" stroke="#868686" stroke-width="0.750"/><circle cx="1.700" cy="8.300" r="1.200" fill="#fdfdfd" stroke="#868686" stroke-width="0.750"/></svg>
<svg style="left:1251.1px;top:66.8px" width="8" height="3" viewBox="0 0 8 3"><rect x="0.600" y="0.400" width="6.600" height="2.200" rx="0.300" fill="#fff" stroke="#404040" stroke-width="1"/></svg><svg style="left:1267.1px;top:66.8px" width="7" height="7" viewBox="0 0 7 7"><rect x="0.500" y="0.500" width="6" height="6" fill="#fff" stroke="#3c3c3c" stroke-width="1"/><rect x="0" y="0" width="7" height="1.800" fill="#3c3c3c"/></svg>
<div id="edtabs" class="abs"></div>
<div class="seltab" style="left:114px;top:234px;width:66.800px;height:22px"></div>
<svg style="left:4.5px;top:239.8px" width="10.67" height="10.67" viewBox="0 0 16 16"><rect x="1.800" y="2.400" width="11.800" height="10.800" fill="#f4fbff" stroke="#b8ad94" stroke-width="1.300"/><rect x="1.200" y="1.800" width="13" height="2.900" fill="#4c8fd0"/></svg>
<span class="t" style="left:16.51px;top:238px">Getting</span><span class="t" style="left:59.92px;top:238px;transform:scaleX(0.954)">Started</span>
<svg style="left:115.5px;top:239.6px" width="10.67" height="10.67" viewBox="0 0 16 16"><path d="M4 0.800 H11 L14.800 4.500 V15 H4 Z" fill="#f2f5fa" stroke="#c4b07c" stroke-width="1.100"/><path d="M11 0.800 V4.500 H14.800" fill="#e8e0c4" stroke="#c4b07c" stroke-width="0.900"/><circle cx="10" cy="9" r="3.300" fill="#5b8fce"/><path d="M11.700 7.900 A2 2 0 1 0 11.700 10.300" stroke="#fff" stroke-width="1.300" fill="none"/><path d="M3.300 9.300 L6.800 15.600 H-0.200 Z" fill="#f4c444" stroke="#d8a020" stroke-width="0.600"/><path d="M3.300 11.300 V13.400 M3.300 14.100 V14.900" stroke="#503800" stroke-width="0.900"/></svg>
<span class="t" style="left:129.03px;top:238px;transform:scaleX(0.968)">main.c</span>
<svg style="left:169.1px;top:242.2px" width="6.4" height="6.4" viewBox="0 0 6.4 6.4"><path d="M0.300 0.300 L6.1000000000000005 6.1000000000000005 M6.1000000000000005 0.300 L0.300 6.1000000000000005" stroke="#5a5a5a" stroke-width="0.950"/></svg>
<svg style="left:1251.2px;top:237.9px" width="8" height="3" viewBox="0 0 8 3"><rect x="0.600" y="0.400" width="6.600" height="2.200" rx="0.300" fill="#fff" stroke="#404040" stroke-width="1"/></svg><svg style="left:1267.2px;top:237.9px" width="7" height="7" viewBox="0 0 7 7"><rect x="0.500" y="0.500" width="6" height="6" fill="#fff" stroke="#3c3c3c" stroke-width="1"/><rect x="0" y="0" width="7" height="1.800" fill="#3c3c3c"/></svg>
<div id="edbody" class="abs"><div id="code">
<div class="ln" style="top:2.10px"><span class="num"> 1</span><span class="gap"></span><span class="kw">#include</span> <span class="inc">&lt;msp430.h&gt;</span></div>
<div class="ln" style="top:17.43px"><span class="num"> 2</span><span class="gap"></span><span class="kw">#include</span> <span class="inc">&lt;stdio.h&gt;</span></div>
<div class="ln" style="top:32.77px"><span class="num"> 3</span><span class="gap"></span><span class="kw">#include</span> <span class="inc">&lt;math.h&gt;</span></div>
<div class="ln" style="top:48.10px"><span class="num"> 4</span><span class="gap"></span></div>
<div class="ln" style="top:63.43px"><span class="num"> 5</span><span class="gap"></span></div>
<div class="ln" style="top:78.77px"><span class="num"> 6</span><span class="gap"></span><span class="cm">//Defines output voltages for virtual power tree</span></div>
<div class="ln" style="top:94.10px"><span class="num"> 7</span><span class="gap"></span><span class="cm">//Array entries numbers correspond directly to </span><span class="cm">vout</span><span class="cm"> #s</span></div>
<div class="ln" style="top:109.43px"><span class="num"> 8</span><span class="gap"></span><span class="kw">const</span> <span class="kw">float</span> outputVoltages[] = {1600,1600,1600,1600,1600,1600,3000,2500,2500,2500,2500,2500};</div>
<div class="ln" style="top:124.76px"><span class="num"> 9</span><span class="gap"></span></div>
<div class="ln" style="top:140.10px"><span class="num">10</span><span class="gap"></span><span class="cm">//Determines if each virtual power rail requires an enable signal to start up</span></div>
<div class="ln" style="top:155.43px"><span class="num">11</span><span class="gap"></span><span class="cm">//0 = EN not required</span></div>
<div class="ln" style="top:170.76px"><span class="num">12</span><span class="gap"></span><span class="cm">//1 = EN required</span></div>
<div class="ln" style="top:186.10px"><span class="num">13</span><span class="gap"></span><span class="kw">const</span> <span class="kw">int</span> requiresEN = 0;</div>
<div class="ln" style="top:201.43px"><span class="num">14</span><span class="gap"></span></div>
<div class="ln" style="top:216.76px"><span class="num">15</span><span class="gap"></span><span class="cm">//I2C Global Variables</span></div>
<div class="ln" style="top:232.09px"><span class="num">16</span><span class="gap"></span><span class="cm">//Address 1: Monitor 1 (MON1-6)</span></div>
<div class="ln" style="top:247.43px"><span class="num">17</span><span class="gap"></span><span class="cm">//Address 2: Monitor 2 (MON7-12)</span></div>
<div class="ln" style="top:262.76px"><span class="num">18</span><span class="gap"></span><span class="cm">//Address 3: Sequencer 1 (EN1-6)</span></div>
<div class="ln" style="top:278.09px"><span class="num">19</span><span class="gap"></span><span class="cm">//Address 4: Sequencer 2 (EN7-12)</span></div>
<div class="ln" style="top:293.43px"><span class="num">20</span><span class="gap"></span><span class="cm">//NOTE: THESE ARE NOT THE CORRECT ADDRESSES!! UPDATE THEM BEFORE USING I2C</span></div>
<div class="ln" style="top:308.16px"><span class="num">  </span><span class="gap"></span><span class="kw">unsigned</span> <span class="kw">char</span> currentaddr[] = {monaddr, seqaddr};</div>
<svg style="left:377.700px;top:104.400px" width="30" height="2" viewBox="0 0 30 2"><path d="M0 1.600 L1.35 0.4 L2.70 1.6 L4.05 0.4 L5.40 1.6 L6.75 0.4 L8.10 1.6 L9.45 0.4 L10.80 1.6 L12.15 0.4 L13.50 1.6 L14.85 0.4 L16.20 1.6 L17.55 0.4 L18.90 1.6 L20.25 0.4 L21.60 1.6 L22.95 0.4 L24.30 1.6 L25.65 0.4 L27.00 1.6 L28.35 0.4 L29.70 1.6" stroke="#ee9a88" stroke-width="0.650" fill="none"/></svg>
</div></div>
<div id="marker" class="abs"></div>
<div id="vscroll" class="abs"></div><div id="vthumb" class="abs"></div>
<svg style="left:1258.6px;top:261.8px" width="8.2" height="7" viewBox="0 0 8.2 7"><path d="M0.700 6 L4.100 1.500 L7.500 6" stroke="#484848" stroke-width="1.700" fill="none"/></svg>
<svg style="left:1258.6px;top:554.6px" width="8.2" height="7" viewBox="0 0 8.2 7"><path d="M0.700 1 L4.100 5.500 L7.500 1" stroke="#484848" stroke-width="1.700" fill="none"/></svg>
<div id="hstrip" class="abs"></div><div id="edleft" class="abs"></div><div id="hleft" class="abs"></div><div id="hscroll" class="abs"></div><div id="hcorner" class="abs"></div>
<svg style="left:38.3px;top:571.1px" width="6.5" height="8" viewBox="0 0 6.5 8"><path d="M5.600 0.500 L1.300 4 L5.600 7.500" stroke="#a4a4a4" stroke-width="1.700" fill="none"/></svg>
<svg style="left:1241.8px;top:571.1px" width="6.5" height="8" viewBox="0 0 6.5 8"><path d="M0.900 0.500 L5.200 4 L0.900 7.500" stroke="#c2c2c2" stroke-width="1.700" fill="none"/></svg>
<div id="ruler" class="abs"></div>
<div class="abs" style="left:1272.400px;top:259.1px;width:5.300px;height:4.800px;background:#f8c828;border:0.700px solid #c0ac68"></div>
<div class="abs" style="left:1272px;top:292.1px;width:6.200px;height:3.600px;background:#e4ebf5;border:1px solid #aebfd9;border-radius:1px"></div>
<div class="abs" style="left:1272px;top:313.3px;width:6px;height:7px;background:#e8eef8;border:1px solid #a4bad8;border-top:2.600px solid #8ca6cc"><div style="margin-top:1.200px;height:1px;background:#a4bad8"></div></div>
<div class="abs" style="left:1272px;top:337px;width:6.200px;height:3.600px;background:#e4ebf5;border:1px solid #aebfd9;border-radius:1px"></div>
<div class="abs" style="left:1272px;top:359.9px;width:6px;height:5px;background:#e8eef8;border:1px solid #a4bad8;border-top:2.600px solid #8ca6cc"></div>
<div class="abs" style="left:1272px;top:418.8px;width:6px;height:3px;background:#d0e4ff;border:1px solid #4a90f0"></div>
<div class="abs" style="left:1272px;top:431px;width:6.200px;height:3.600px;background:#e4ebf5;border:1px solid #aebfd9;border-radius:1px"></div>
<div class="abs" style="left:1272px;top:438.2px;width:6.200px;height:3.600px;background:#e4ebf5;border:1px solid #aebfd9;border-radius:1px"></div>
<div class="abs" style="left:1272px;top:443.4px;width:6.200px;height:3.600px;background:#e4ebf5;border:1px solid #aebfd9;border-radius:1px"></div>
<div class="abs" style="left:1272px;top:448.59999999999997px;width:6.200px;height:3.600px;background:#e4ebf5;border:1px solid #aebfd9;border-radius:1px"></div>
<div class="abs" style="left:1272px;top:453.8px;width:6.200px;height:3.600px;background:#e4ebf5;border:1px solid #aebfd9;border-radius:1px"></div>
<div class="abs" style="left:1272px;top:459.0px;width:6.200px;height:3.600px;background:#e4ebf5;border:1px solid #aebfd9;border-radius:1px"></div>
<div class="abs" style="left:1272px;top:464.2px;width:6.200px;height:3.600px;background:#e4ebf5;border:1px solid #aebfd9;border-radius:1px"></div>
<div class="abs" style="left:1272px;top:469.4px;width:6.200px;height:3.600px;background:#e4ebf5;border:1px solid #aebfd9;border-radius:1px"></div>
<div class="abs" style="left:1272px;top:474.59999999999997px;width:6.200px;height:3.600px;background:#e4ebf5;border:1px solid #aebfd9;border-radius:1px"></div>
<div class="abs" style="left:1272px;top:479.8px;width:6.200px;height:3.600px;background:#e4ebf5;border:1px solid #aebfd9;border-radius:1px"></div>
<div class="abs" style="left:1272px;top:485.0px;width:6.200px;height:3.600px;background:#e4ebf5;border:1px solid #aebfd9;border-radius:1px"></div>
<div class="abs" style="left:1272px;top:490.2px;width:6.200px;height:3.600px;background:#e4ebf5;border:1px solid #aebfd9;border-radius:1px"></div>
<div class="abs" style="left:1272px;top:495.4px;width:6.200px;height:3.600px;background:#e4ebf5;border:1px solid #aebfd9;border-radius:1px"></div>
<div class="abs" style="left:1272px;top:545.5px;width:6px;height:3px;background:#fdf0b8;border:1px solid #f0d878"></div>
<div id="conarea" class="abs"></div><div id="conline" class="abs"></div><div id="congap" class="abs"></div><div id="contabs" class="abs"></div>
<div class="seltab" style="left:1px;top:588px;width:76.500px;height:22px;border-radius:3px 0 0 0"></div>
<svg style="left:4.8px;top:594.5px" width="10.67" height="10.67" viewBox="0 0 16 16"><rect x="1.200" y="0.600" width="13" height="11" rx="2.200" fill="#3c64b0"/><rect x="3.200" y="2.600" width="9" height="7" fill="#d8e4f8"/><path d="M4.200 4.100 H8.500 M4.200 6 H10.500 M8.500 7.800 H10.800" stroke="#5878b8" stroke-width="1"/><path d="M5.500 11.600 H10 V12.400 H12.500 V13.700 H3 V12.400 H5.500 Z" fill="#4468b0" opacity="0.800"/></svg>
<span class="t" style="left:17.42px;top:593px;transform:scaleX(0.976)">Console</span>
<svg style="left:66px;top:596.8px" width="6.4" height="6.4" viewBox="0 0 6.4 6.4"><path d="M0.300 0.300 L6.1000000000000005 6.1000000000000005 M6.1000000000000005 0.300 L0.300 6.1000000000000005" stroke="#5a5a5a" stroke-width="0.950"/></svg>
<svg style="left:1171.5px;top:591px" width="10.67" height="10.67" viewBox="0 0 16 16"><rect x="1" y="6" width="11.500" height="9" fill="#f6f6f6" stroke="#c0c0c0" stroke-width="1.100"/><rect x="1" y="6" width="11.500" height="2.500" fill="#d0d0d0"/><path d="M8 9.500 L12 5" stroke="#b4b4b4" stroke-width="1.600"/><circle cx="13" cy="3.500" r="2.600" fill="#b8b8b8"/></svg>
<svg style="left:1187px;top:591.2px" width="10.67" height="10.67" viewBox="0 0 16 16"><rect x="1.500" y="1" width="13" height="11" rx="1.800" fill="#d8d8d8" stroke="#a8a8a8" stroke-width="1.200"/><rect x="3.700" y="3.200" width="8.600" height="6.600" fill="#f8f8f8"/><path d="M4.700 5 H8.500 M6.500 7 H10.500" stroke="#a8a8a8" stroke-width="1"/><path d="M3.500 13 H12.500 V14.300 H3.500 Z" fill="#c4c4c4"/></svg>
<svg style="left:1203.2px;top:594px" width="8.2" height="4.3" viewBox="0 0 8.2 4.3"><path d="M0 0 H8.2 L4.1 4.3 Z" fill="#727272"/></svg>
<svg style="left:1218.5px;top:591.5px" width="10.67" height="10.67" viewBox="0 0 16 16"><rect x="0.800" y="3" width="13" height="11.300" fill="#eef6fc" stroke="#c4b48c" stroke-width="1.100"/><rect x="0.300" y="2.500" width="9.500" height="2.800" fill="#3f88cc"/><path d="M5 14 Q12 13 13.500 7.500 L13.500 14 Z" fill="#f6e6a4"/><circle cx="12.400" cy="3.900" r="2.700" fill="#fbeeb8" stroke="#c8a030" stroke-width="1.100"/><path d="M12.400 -0.500 V1 M12.400 6.800 V8.300 M8 3.900 H9.500 M15.300 3.900 H16.800" stroke="#c8a030" stroke-width="1"/></svg>
<svg style="left:1234.8px;top:594px" width="8.2" height="4.3" viewBox="0 0 8.2 4.3"><path d="M0 0 H8.2 L4.1 4.3 Z" fill="#000"/></svg>
<svg style="left:1251.2px;top:592.4px" width="8" height="3" viewBox="0 0 8 3"><rect x="0.600" y="0.400" width="6.600" height="2.200" rx="0.300" fill="#fff" stroke="#404040" stroke-width="1"/></svg><svg style="left:1267.2px;top:592.4px" width="7" height="7" viewBox="0 0 7 7"><rect x="0.500" y="0.500" width="6" height="6" fill="#fff" stroke="#3c3c3c" stroke-width="1"/><rect x="0" y="0" width="7" height="1.800" fill="#3c3c3c"/></svg>
<span class="t" style="left:2.02px;top:612px;transform:scaleX(1.065)">No</span><span class="t" style="left:21.61px;top:612px;transform:scaleX(0.955)">consoles</span><span class="t" style="left:70.88px;top:612px;transform:scaleX(1.088)">to</span><span class="t" style="left:85.33px;top:612px;transform:scaleX(0.982)">display</span><span class="t" style="left:126.31px;top:612px;transform:scaleX(0.917)">at</span><span class="t" style="left:139.6px;top:612px;transform:scaleX(0.949)">this</span><span class="t" style="left:161.5px;top:612px;transform:scaleX(1.021)">time.</span>
<div id="conrule" class="abs"></div>
<div id="status" class="abs"></div>
<div class="abs" style="left:553px;top:738px;width:1px;height:19px;background:#adadad"></div><div class="abs" style="left:554px;top:738px;width:0.8px;height:19px;background:#fdfdfd"></div>
<div class="abs" style="left:695.2px;top:738px;width:1px;height:19px;background:#adadad"></div><div class="abs" style="left:696.2px;top:738px;width:0.8px;height:19px;background:#fdfdfd"></div>
<div class="abs" style="left:831.7px;top:738px;width:1px;height:19px;background:#adadad"></div><div class="abs" style="left:832.7px;top:738px;width:0.8px;height:19px;background:#fdfdfd"></div>
<span class="t" style="left:558.26px;top:741px">Writable</span>
<span class="t" style="left:700.17px;top:741px">Smart</span><span class="t" style="left:733.87px;top:741px;transform:scaleX(1.022)">Insert</span>
<span class="t" style="left:836.99px;top:741px;transform:scaleX(0.973)">267</span><span class="t" style="left:859.48px;top:741px">:</span><span class="t" style="left:866.15px;top:741px">1</span><span class="t" style="left:875.48px;top:741px">:</span><span class="t" style="left:882.65px;top:741px;transform:scaleX(0.99)">10572</span>
<svg style="left:966.35px;top:744.3px" width="2" height="10.8" viewBox="0 0 2 10.8"><rect x="0" y="0.00" width="1.200" height="1.200" fill="#d4ccc4"/><rect x="0" y="2.70" width="1.200" height="1.200" fill="#d4ccc4"/><rect x="0" y="5.40" width="1.200" height="1.200" fill="#d4ccc4"/><rect x="0" y="8.10" width="1.200" height="1.200" fill="#d4ccc4"/></svg>
<svg style="left:1256.35px;top:744.3px" width="2" height="10.8" viewBox="0 0 2 10.8"><rect x="0" y="0.00" width="1.200" height="1.200" fill="#d4ccc4"/><rect x="0" y="2.70" width="1.200" height="1.200" fill="#d4ccc4"/><rect x="0" y="5.40" width="1.200" height="1.200" fill="#d4ccc4"/><rect x="0" y="8.10" width="1.200" height="1.200" fill="#d4ccc4"/></svg>
<svg style="left:1269.65px;top:744.3px" width="2" height="10.8" viewBox="0 0 2 10.8"><rect x="0" y="0.00" width="1.200" height="1.200" fill="#d4ccc4"/><rect x="0" y="2.70" width="1.200" height="1.200" fill="#d4ccc4"/><rect x="0" y="5.40" width="1.200" height="1.200" fill="#d4ccc4"/><rect x="0" y="8.10" width="1.200" height="1.200" fill="#d4ccc4"/></svg>
<div id="leftedge" class="abs"></div><div id="leftedge2" class="abs"></div>
</body>
</html>
